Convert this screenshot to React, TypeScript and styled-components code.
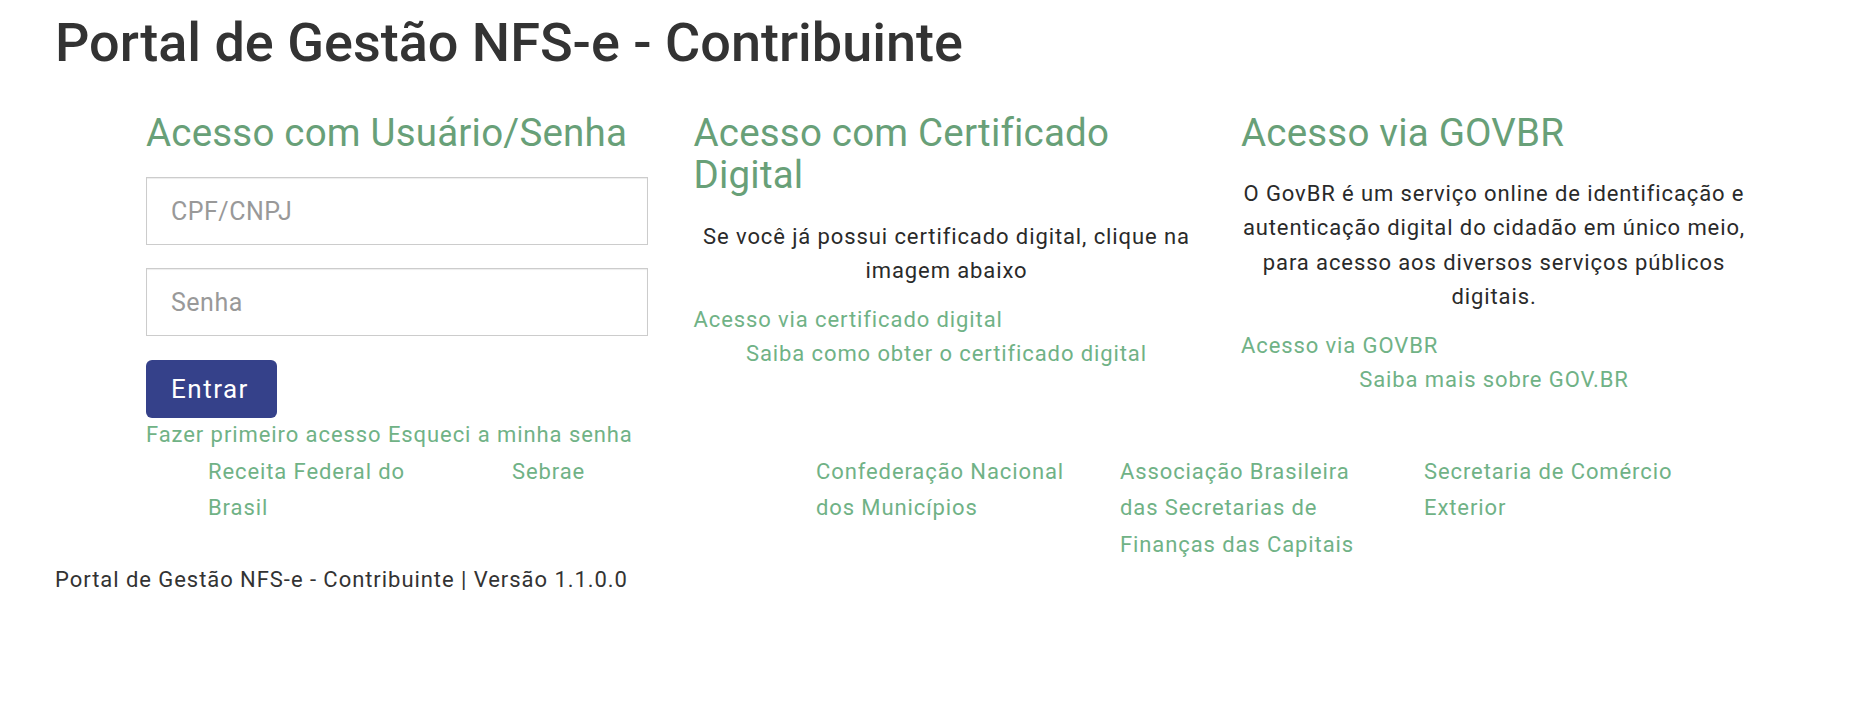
import * as React from "react";
import styled, { createGlobalStyle } from "styled-components";

const GlobalStyle = createGlobalStyle`
  body {
    margin: 0;
    background: #fff;
    font-family: Roboto, "Liberation Sans", Arial, sans-serif;
    color: #333;
  }
`;

const Page = styled.div`
  padding: 11px 0 40px 55px;
`;

const Title = styled.h1`
  margin: 0;
  font-size: 54px;
  font-weight: 500;
  line-height: 64.8px;
  color: #333;
`;

const Columns = styled.div`
  display: grid;
  grid-template-columns: repeat(3, 506px);
  column-gap: 41.5px;
  align-items: start;
  margin: 35.8px 0 0 91px;
`;

const Column = styled.div`
  display: flex;
  flex-direction: column;
  align-items: flex-start;
`;

const Heading = styled.h3`
  margin: 0 0 22.8px;
  font-size: 38.5px;
  font-weight: 400;
  line-height: 42.6px;
  letter-spacing: 0.2px;
  color: #68a078;
`;

const Field = styled.input<{ $gap: number }>`
  box-sizing: border-box;
  width: 502px;
  height: 68.4px;
  margin: 0 0 ${(p) => p.$gap}px;
  padding: 0 24px;
  border: 1px solid #ccc;
  border-radius: 0;
  box-shadow: inset 0 1px 1px rgba(0, 0, 0, 0.075);
  font-family: inherit;
  font-size: 25px;
  letter-spacing: 0.5px;
  color: #555;
  outline: none;

  &::placeholder {
    color: #999;
  }
`;

const Button = styled.button`
  height: 58.5px;
  padding: 0 28px 0 25px;
  border: none;
  border-radius: 6px;
  background: #35418a;
  color: #fff;
  font-family: inherit;
  font-size: 26px;
  letter-spacing: 1.5px;
  cursor: pointer;
`;

const LinkRow = styled.div`
  font-size: 22px;
  line-height: 34.3px;
  letter-spacing: 0.92px;
`;

const Link = styled.a`
  color: #70b286;
  text-decoration: none;
`;

const LinkLine = styled.div<{ $center?: boolean }>`
  align-self: stretch;
  font-size: 22px;
  line-height: 34.3px;
  letter-spacing: 0.9px;
  text-align: ${(p) => (p.$center ? "center" : "left")};
`;

const Text = styled.p`
  align-self: stretch;
  margin: 0 0 14.5px;
  font-size: 22px;
  line-height: 34.3px;
  letter-spacing: 0.9px;
  text-align: center;
  color: #2a2a2a;
`;

const Partners = styled.div`
  display: grid;
  grid-template-columns: repeat(5, 262px);
  column-gap: 42px;
  margin: 1.2px 0 0 153px;
  font-size: 22px;
  line-height: 36.6px;
  letter-spacing: 0.9px;
`;

const Footer = styled.footer`
  font-size: 22px;
  line-height: 34.3px;
  letter-spacing: 0.95px;
  color: #333;
`;

const partners = [
  "Receita Federal do Brasil",
  "Sebrae",
  "Confederação Nacional dos Municípios",
  "Associação Brasileira das Secretarias de Finanças das Capitais",
  "Secretaria de Comércio Exterior",
];

const App = () => {
  return (
    <Page>
      <GlobalStyle />
      <Title>Portal de Gestão NFS-e - Contribuinte</Title>
      <Columns>
        <Column>
          <Heading>Acesso com Usuário/Senha</Heading>
          <Field $gap={22.6} placeholder="CPF/CNPJ" />
          <Field $gap={23.3} type="password" placeholder="Senha" />
          <Button>Entrar</Button>
          <LinkRow>
            <Link href="#">Fazer primeiro acesso</Link>{" "}
            <Link href="#">Esqueci a minha senha</Link>
          </LinkRow>
        </Column>
        <Column>
          <Heading>Acesso com Certificado Digital</Heading>
          <Text>Se você já possui certificado digital, clique na imagem abaixo</Text>
          <LinkLine>
            <Link href="#">Acesso via certificado digital</Link>
          </LinkLine>
          <LinkLine $center>
            <Link href="#">Saiba como obter o certificado digital</Link>
          </LinkLine>
        </Column>
        <Column>
          <Heading>Acesso via GOVBR</Heading>
          <Text>
            O GovBR é um serviço online de identificação e autenticação digital do
            cidadão em único meio, para acesso aos diversos serviços públicos digitais.
          </Text>
          <LinkLine>
            <Link href="#">Acesso via GOVBR</Link>
          </LinkLine>
          <LinkLine $center>
            <Link href="#">Saiba mais sobre GOV.BR</Link>
          </LinkLine>
        </Column>
      </Columns>
      <Partners>
        {partners.map((name) => (
          <Link key={name} href="#">
            {name}
          </Link>
        ))}
      </Partners>
      <Footer>Portal de Gestão NFS-e - Contribuinte | Versão 1.1.0.0</Footer>
    </Page>
  );
};

export default App;
